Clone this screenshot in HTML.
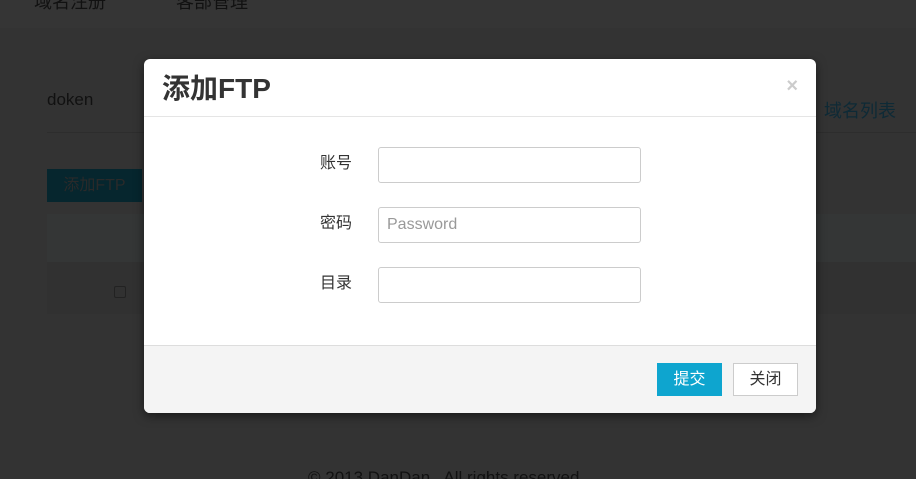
<!DOCTYPE html>
<html style="background:#333"><head><meta charset="utf-8"><style>
*{box-sizing:border-box;margin:0;padding:0}
html,body{width:916px;height:479px;overflow:hidden;background:#333}
body{font-family:"Liberation Sans","Noto Sans CJK SC",sans-serif;position:relative}
.bg{position:absolute;left:0;top:0;width:916px;height:479px;background:#333}
.nav{position:absolute;left:0;top:0;width:916px;height:28px;background:#353535}
.t{position:absolute;color:#111;white-space:nowrap}
.modal{position:absolute;left:144px;top:59px;width:672px;height:354px;background:#fff;border-radius:6px;overflow:hidden;box-shadow:0 3px 10px rgba(0,0,0,.5)}
.hd{height:58px;border-bottom:1px solid #e5e5e5;position:relative}
.hd h3{position:absolute;left:18px;top:8px;font-size:28px;font-weight:bold;color:#333}
.x{position:absolute;right:18px;top:16px;color:#ccc;font-size:20px;font-weight:bold}
.lab{position:absolute;left:176px;font-size:16px;color:#333;line-height:20px}
.in{position:absolute;left:234px;width:263px;height:36px;border:1px solid #ccc;border-radius:3px;font-size:16px;color:#999;padding:8px 8px;line-height:18px}
.ft{position:absolute;left:0;top:286px;width:672px;height:68px;background:#f4f4f4;border-top:1px solid #ddd}
.b{position:absolute;top:17px;height:33px;width:65px;font-size:16px;text-align:center;line-height:33px}
</style></head><body>
<div class="bg"></div>
<div class="nav"></div>
<div class="t" style="left:34px;top:-12px;font-size:18px">域名注册</div>
<div class="t" style="left:176px;top:-12px;font-size:18px">客部管理</div>
<div class="t" style="left:47px;top:90px;font-size:17px">doken</div>
<div style="position:absolute;left:47px;top:132px;width:869px;height:1px;background:#2d2d2d"></div>
<div class="t" style="left:824px;top:97px;font-size:18px;color:#0e2a36">域名列表</div>
<div style="position:absolute;left:47px;top:169px;width:95px;height:33px;background:#06262e;color:#2a2a2a;font-size:16px;line-height:33px;text-align:center">添加FTP</div>
<div style="position:absolute;left:47px;top:214px;width:869px;height:48px;background:#343636"></div>
<div style="position:absolute;left:47px;top:262px;width:869px;height:52px;background:#313131"></div>
<div style="position:absolute;left:114px;top:286px;width:12px;height:12px;border:1px solid #222;border-radius:2px"></div>
<div class="t" style="left:308px;top:468px;font-size:17px;line-height:20px">© 2013 DanDan.. All rights reserved</div>
<div class="modal">
<div class="hd"><h3>添加FTP</h3><span class="x">×</span></div>
<div class="lab" style="top:95px">账号</div>
<div class="in" style="top:88px"></div>
<div class="lab" style="top:155px">密码</div>
<div class="in" style="top:148px">Password</div>
<div class="lab" style="top:215px">目录</div>
<div class="in" style="top:208px"></div>
<div class="ft">
<div class="b" style="left:513px;background:#0ea5cf;color:#fff">提交</div>
<div class="b" style="left:589px;background:#fff;border:1px solid #ccc;color:#333;line-height:31px">关闭</div>
</div>
</div>
</body></html>
